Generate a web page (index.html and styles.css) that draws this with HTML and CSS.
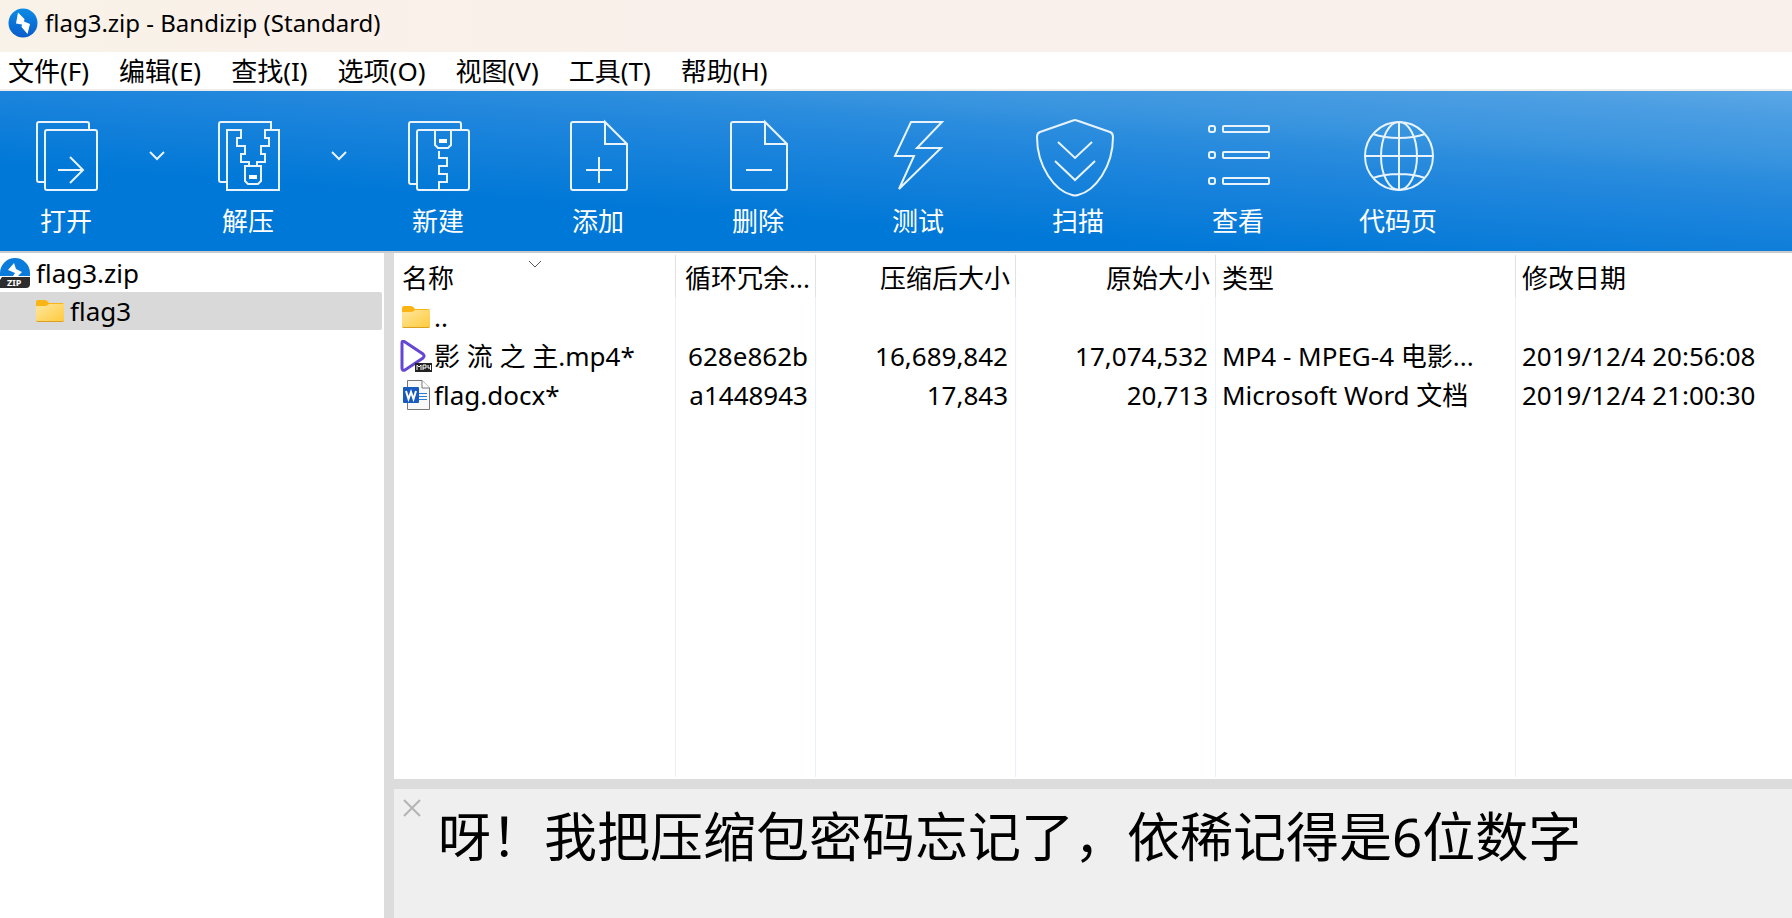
FILE: index.html
```html
<!DOCTYPE html>
<html lang="zh-CN">
<head>
<meta charset="utf-8">
<title>flag3.zip - Bandizip (Standard)</title>
<link rel="stylesheet" href="styles.css">
</head>
<body>
<svg class="defs" aria-hidden="true">
  <defs>
    <linearGradient id="blue" x1="0" y1="0" x2="0" y2="1"><stop offset="0" stop-color="#0c8be6"/><stop offset="1" stop-color="#0a5cca"/></linearGradient>
    <linearGradient id="gold" x1="0" y1="0" x2="1" y2="1"><stop offset="0" stop-color="#ffe7a0"/><stop offset="1" stop-color="#ffca3a"/></linearGradient>
    <symbol id="folder" viewBox="0 0 28 22">
      <path d="M0 5V2Q0 0 2 0H9Q11 0 13 3H26Q28 3 28 5V8H0Z" fill="#fab414"/>
      <path d="M0 7Q0 6 1 6H9Q11 6 13 4H28V20Q28 22 26 22H2Q0 22 0 20Z" fill="url(#gold)"/>
      <path d="M0 20Q0 22 2 22H26Q28 22 28 20L27 21H1Z" fill="#dc9f1e"/>
    </symbol>
    <symbol id="chevron" viewBox="0 0 16 10"><path d="M1 1L8 8L15 1"/></symbol>
  </defs>
</svg>
<div class="window">
  <header class="titlebar">
    <svg width="30" height="30" viewBox="0 0 30 30"><circle cx="15" cy="15" r="14.500" fill="url(#blue)"/><path d="M10 4.500L16.500 11L16 13.500L22 16L19.500 26L13.500 19L14 16.500L8 15.500Z" fill="#fff"/></svg>
    <h1 class="title">flag3.zip - Bandizip (Standard)</h1>
  </header>
  <nav class="menubar">
    <button>文件(F)</button>
    <button>编辑(E)</button>
    <button>查找(I)</button>
    <button>选项(O)</button>
    <button>视图(V)</button>
    <button>工具(T)</button>
    <button>帮助(H)</button>
  </nav>
  <div class="toolbar">
    <button class="tool tool-split">
      <svg width="80" height="80" viewBox="0 0 80 80"><path d="M19 65H13Q11 65 11 63V7Q11 5 13 5H61Q63 5 63 7V13"/><rect x="19" y="13" width="52" height="60" rx="2"/><path d="M32 53H57M44 40L57 53L44 66"/></svg>
      <span>打开</span>
    </button>
    <button class="drop" aria-label="打开选项"><svg width="16" height="10"><use href="#chevron"/></svg></button>
    <button class="tool tool-split">
      <svg width="80" height="80" viewBox="0 0 80 80"><path d="M19 65H13Q11 65 11 63V7Q11 5 13 5H63V13"/><path d="M41 49V45H33V37H37V29H29V21H33V13H19V73H71V13H57V21H61V29H53V37H57V45H49V49"/><path d="M37 49H53V64L50 67H40L37 64Z"/><path class="solid" d="M41 58H49V62H41Z"/></svg>
      <span>解压</span>
    </button>
    <button class="drop" aria-label="解压选项"><svg width="16" height="10"><use href="#chevron"/></svg></button>
    <button class="tool tool-new">
      <svg width="80" height="80" viewBox="0 0 80 80"><path d="M19 67H13Q11 67 11 65V7Q11 5 13 5H61Q63 5 63 7V13"/><rect x="19" y="13" width="52" height="60" rx="2"/><path d="M37 13V28L40 31H50L53 28V13M41 34V41H49V49H41V57H49V65H41V73"/><path class="solid" d="M41 22H49V26H41Z"/></svg>
      <span>新建</span>
    </button>
    <button class="tool">
      <svg width="80" height="80" viewBox="0 0 80 80"><path d="M47 5H15Q13 5 13 7V71Q13 73 15 73H67Q69 73 69 71V27L47 5V27H69M41 40V66M28 53H54"/></svg>
      <span>添加</span>
    </button>
    <button class="tool">
      <svg width="80" height="80" viewBox="0 0 80 80"><path d="M47 5H15Q13 5 13 7V71Q13 73 15 73H67Q69 73 69 71V27L47 5V27H69M28 53H54"/></svg>
      <span>删除</span>
    </button>
    <button class="tool">
      <svg width="80" height="80" viewBox="0 0 80 80"><path d="M33 5H64L39 31H63L21 72L36 39H17Z"/></svg>
      <span>测试</span>
    </button>
    <button class="tool">
      <svg width="80" height="80" viewBox="0 0 80 80"><path d="M35 3.500Q37 2.500 39 3.500L72 15Q75 16 75 20C75 50 57 74 40 78Q37 79 34 78C17 74 -1 50 -1 20Q-1 16 2 15Z"/><path d="M20 25L37 41L54 25M17 44L37 63L57 44"/></svg>
      <span>扫描</span>
    </button>
    <button class="tool">
      <svg width="80" height="80" viewBox="0 0 80 80"><rect x="11" y="9" width="6" height="6" rx="2"/><rect x="25" y="9" width="46" height="6" rx="1"/><rect x="11" y="35" width="6" height="6" rx="2"/><rect x="25" y="35" width="46" height="6" rx="1"/><rect x="11" y="61" width="6" height="6" rx="2"/><rect x="25" y="61" width="46" height="6" rx="1"/></svg>
      <span>查看</span>
    </button>
    <button class="tool">
      <svg width="80" height="80" viewBox="0 0 80 80"><circle cx="41" cy="39" r="34"/><ellipse cx="41" cy="39" rx="18" ry="34"/><path d="M41 5V73M7 39H75M15 17Q26 21 41 21T67 17M15 61Q26 57 41 57T67 61"/></svg>
      <span>代码页</span>
    </button>
  </div>
  <main class="content">
    <aside class="tree">
      <a class="node" href="#">
        <svg width="30" height="30" viewBox="0 0 30 30"><path d="M0 18V15A15 15 0 0 1 30 15V18Z" fill="#0a7cdb"/><path d="M14 5L16 11L22 14L18 18H13L15 15L8 12Z" fill="#fff"/><path d="M2 19H30V26Q30 30 26 30H0V22Z" fill="#2d2d2d"/><text x="7" y="28" class="zip-tag">ZIP</text></svg>
        <span>flag3.zip</span>
      </a>
      <a class="node node-child selected" href="#">
        <svg width="28" height="22"><use href="#folder"/></svg>
        <span>flag3</span>
      </a>
    </aside>
    <section class="main">
      <div class="files">
        <table>
          <colgroup><col class="c-name"><col class="c-crc"><col class="c-size"><col class="c-size"><col class="c-type"><col></colgroup>
          <thead>
            <tr>
              <th>名称<svg class="sort" width="14" height="8" viewBox="0 0 14 8"><path d="M1 1L7 7L13 1"/></svg></th>
              <th class="num">循环冗余...</th>
              <th class="num">压缩后大小</th>
              <th class="num">原始大小</th>
              <th>类型</th>
              <th>修改日期</th>
            </tr>
          </thead>
          <tbody>
            <tr>
              <td><div class="file"><span class="file-icon"><svg width="28" height="22"><use href="#folder"/></svg></span>..</div></td>
              <td></td><td></td><td></td><td></td><td></td>
            </tr>
            <tr>
              <td><div class="file"><span class="file-icon"><svg width="32" height="32" viewBox="0 0 32 32"><path d="M2 3Q2 0 5 2L23 14Q25 16 23 18L5 30Q2 31 2 28Z" fill="#fff" stroke="#6448d2" stroke-width="3"/><path d="M15 23H32V32H15Z" fill="#222"/><path d="M17 30V25L19 27L21 25V30M23 30V25H26V28H23M28 25V28H31M30.500 25V30" fill="none" stroke="#fff"/></svg></span>影 流 之 主.mp4*</div></td>
              <td class="num">628e862b</td>
              <td class="num">16,689,842</td>
              <td class="num">17,074,532</td>
              <td>MP4 - MPEG-4 电影...</td>
              <td>2019/12/4 20:56:08</td>
            </tr>
            <tr>
              <td><div class="file"><span class="file-icon"><svg width="28" height="30" viewBox="0 0 28 30"><path d="M5.500 .5H20L27.500 8V29.500H5.500Z" fill="#f8f8f8" stroke="#777"/><path d="M20 .5V8H27.500" fill="#fff" stroke="#777"/><path d="M17 13.500H25M17 16.500H25M17 19.500H25" stroke="#2b7cd3"/><rect x="1" y="7" width="16" height="16" rx="1" fill="#185abd"/><path d="M4 11L6.500 19L9 12L11.500 19L14 11" fill="none" stroke="#fff" stroke-width="2"/></svg></span>flag.docx*</div></td>
              <td class="num">a1448943</td>
              <td class="num">17,843</td>
              <td class="num">20,713</td>
              <td>Microsoft Word 文档</td>
              <td>2019/12/4 21:00:30</td>
            </tr>
            <tr class="filler"><td></td><td></td><td></td><td></td><td></td><td></td></tr>
          </tbody>
        </table>
      </div>
      <div class="comment">
        <button class="close" aria-label="关闭"><svg width="18" height="18" viewBox="0 0 18 18"><path d="M1 1L17 17M17 1L1 17"/></svg></button>
        <p>呀！我把压缩包密码忘记了，依稀记得是6位数字</p>
      </div>
    </section>
  </main>
</div>
</body>
</html>
```
FILE: styles.css
```css
* { box-sizing: border-box; }

body {
  margin: 0;
  font: 26px/36px "Noto Sans", "Noto Sans CJK SC", sans-serif;
  color: #000;
  background: #fff;
}

button {
  padding: 0;
  border: 0;
  background: none;
  font: inherit;
  color: inherit;
}

.defs { position: absolute; width: 0; height: 0; }

.window {
  display: flex;
  flex-direction: column;
  min-height: 100vh;
}

/* Title and menu */
.titlebar {
  display: flex;
  align-items: center;
  gap: 7px;
  height: 52px;
  padding: 0 8px 6px;
  background: linear-gradient(90deg, #f9f2e8, #faf0eb 40%);
}

.title {
  margin: 0;
  font-size: 24px;
  font-weight: 400;
}

.menubar {
  display: flex;
  gap: 30px;
  height: 39px;
  padding-left: 8px;
  border-bottom: 2px solid #ececec;
}

.menubar button { white-space: nowrap; }

/* Toolbar */
.toolbar {
  display: flex;
  height: 162px;
  border-bottom: 2px solid #c8cacc;
  color: #fff;
  background: linear-gradient(184deg, #5ba8e6, #4a9de2 10%, #3a95df 23%, #2a8cdd 32%, #1c84dc 44%, #0078d7 70%);
}

.tool {
  display: flex;
  flex: none;
  flex-direction: column;
  align-items: center;
  gap: 6px;
  width: 160px;
  padding-top: 26px;
}

.tool-split { width: 132px; }

.tool-new {
  width: 148px;
  margin-right: 6px;
}

.drop {
  display: flex;
  flex: none;
  justify-content: center;
  width: 50px;
  padding-top: 60px;
}

.toolbar svg {
  overflow: visible;
  fill: none;
  stroke: #e8f3fc;
  stroke-width: 2;
}

.toolbar .solid { fill: #fff; stroke: none; }

/* Folder tree */
.content {
  display: flex;
  flex: 1;
}

.tree {
  flex: none;
  width: 384px;
  padding: 1px 2px 0 0;
}

.node {
  display: flex;
  align-items: center;
  gap: 6px;
  height: 38px;
  border-radius: 0 2px 2px 0;
  color: inherit;
  text-decoration: none;
}

.node-child { padding-left: 36px; }
.selected { background: #d9d9d9; }

.zip-tag {
  font: bold 9px "Noto Sans", sans-serif;
  fill: #fff;
}

/* File list */
.main {
  display: flex;
  flex: 1;
  flex-direction: column;
  min-width: 0;
  border-left: 10px solid #dcdcdc;
}

.files {
  display: flex;
  flex: 1;
  padding: 2px 0;
}

table {
  width: 100%;
  table-layout: fixed;
  border-collapse: separate;
  border-spacing: 0;
}

.c-name { width: 282px; }
.c-crc { width: 140px; }
.c-size { width: 200px; }
.c-type { width: 300px; }

th, td {
  height: 39px;
  padding: 0 7px 0 6px;
  border-right: 1px solid #e8f1fb;
  text-align: left;
  white-space: nowrap;
}

th {
  position: relative;
  height: 42px;
  padding: 3px 5px 0 6px;
  border-color: #e2e2e2;
  font-weight: 400;
}

th:first-child { padding-left: 8px; }
th:last-child, td:last-child { border-right: 0; }
.num { text-align: right; }
.filler td { height: auto; }

.sort {
  position: absolute;
  top: 5px;
  left: 50%;
  transform: translateX(-50%);
  fill: none;
  stroke: #555;
}

.file {
  display: flex;
  align-items: center;
  gap: 2px;
}

.file-icon {
  display: flex;
  flex: none;
  justify-content: center;
  width: 32px;
}

/* Archive comment */
.comment {
  display: flex;
  align-items: flex-start;
  gap: 17px;
  height: 139px;
  padding-left: 9px;
  border-top: 10px solid #dcdcdc;
  background: #efefef;
}

.close {
  display: flex;
  padding-top: 10px;
}

.close svg { stroke: #b4b4b4; stroke-width: 2; }

.comment p {
  margin: 0;
  padding-top: 12px;
  font-size: 53px;
  line-height: 72px;
}
```
